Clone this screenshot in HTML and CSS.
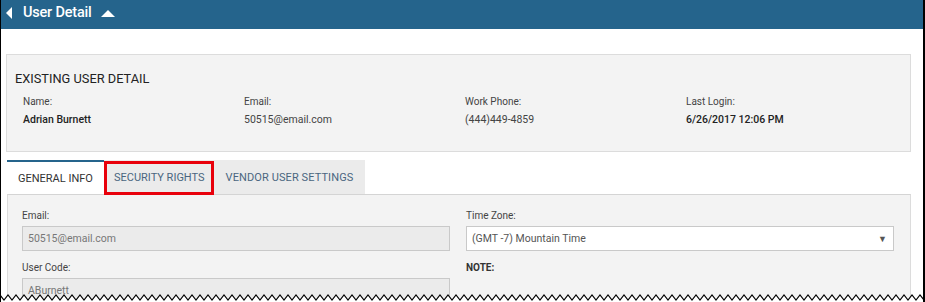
FILE: index.html
```html
<!DOCTYPE html>
<html>
<head>
  <meta charset="UTF-8">
  <title>User Detail</title>
  <link rel="stylesheet" href="styles.css">
</head>
<body>

<div class="frame">
  <div class="topbar">
    <span class="back-tri"></span>
    <span class="title">User Detail</span>
    <span class="up-tri"></span>
  </div>

  <div class="content">
    <div class="summary">
      <h2>EXISTING USER DETAIL</h2>
      <div class="summary-grid">
        <div class="field">
          <div class="label">Name:</div>
          <div class="value strong">Adrian Burnett</div>
        </div>
        <div class="field">
          <div class="label">Email:</div>
          <div class="value">50515@email.com</div>
        </div>
        <div class="field">
          <div class="label">Work Phone:</div>
          <div class="value">(444)449-4859</div>
        </div>
        <div class="field">
          <div class="label">Last Login:</div>
          <div class="value strong">6/26/2017 12:06 PM</div>
        </div>
      </div>
    </div>

    <div class="tabs">
      <div class="tab active">GENERAL INFO</div>
      <div class="tab marked">SECURITY RIGHTS</div>
      <div class="tab last">VENDOR USER SETTINGS</div>
    </div>

    <div class="tab-panel">
      <div class="form-col">
        <div class="form-label">Email:</div>
        <div class="input disabled">50515@email.com</div>
        <div class="form-label">User Code:</div>
        <div class="input disabled">ABurnett</div>
      </div>
      <div class="form-col">
        <div class="form-label">Time Zone:</div>
        <div class="input select">(GMT -7) Mountain Time <span class="arrow">&#9660;</span></div>
        <div class="form-label note">NOTE:</div>
      </div>
    </div>
  </div>

  <svg class="torn" width="925" height="10" viewBox="0 0 925 10">
    <polygon fill="#fff" points="0,10 0,3 4,8 8,3 12,8 16,3 20,8 24,3 28,8 32,3 36,8 40,3 44,8 48,3 52,8 56,3 60,8 64,3 68,8 72,3 76,8 80,3 84,8 88,3 92,8 96,3 100,8 104,3 108,8 112,3 116,8 120,3 124,8 128,3 132,8 136,3 140,8 144,3 148,8 152,3 156,8 160,3 164,8 168,3 172,8 176,3 180,8 184,3 188,8 192,3 196,8 200,3 204,8 208,3 212,8 216,3 220,8 224,3 228,8 232,3 236,8 240,3 244,8 248,3 252,8 256,3 260,8 264,3 268,8 272,3 276,8 280,3 284,8 288,3 292,8 296,3 300,8 304,3 308,8 312,3 316,8 320,3 324,8 328,3 332,8 336,3 340,8 344,3 348,8 352,3 356,8 360,3 364,8 368,3 372,8 376,3 380,8 384,3 388,8 392,3 396,8 400,3 404,8 408,3 412,8 416,3 420,8 424,3 428,8 432,3 436,8 440,3 444,8 448,3 452,8 456,3 460,8 464,3 468,8 472,3 476,8 480,3 484,8 488,3 492,8 496,3 500,8 504,3 508,8 512,3 516,8 520,3 524,8 528,3 532,8 536,3 540,8 544,3 548,8 552,3 556,8 560,3 564,8 568,3 572,8 576,3 580,8 584,3 588,8 592,3 596,8 600,3 604,8 608,3 612,8 616,3 620,8 624,3 628,8 632,3 636,8 640,3 644,8 648,3 652,8 656,3 660,8 664,3 668,8 672,3 676,8 680,3 684,8 688,3 692,8 696,3 700,8 704,3 708,8 712,3 716,8 720,3 724,8 728,3 732,8 736,3 740,8 744,3 748,8 752,3 756,8 760,3 764,8 768,3 772,8 776,3 780,8 784,3 788,8 792,3 796,8 800,3 804,8 808,3 812,8 816,3 820,8 824,3 828,8 832,3 836,8 840,3 844,8 848,3 852,8 856,3 860,8 864,3 868,8 872,3 876,8 880,3 884,8 888,3 892,8 896,3 900,8 904,3 908,8 912,3 916,8 920,3 924,8 925,7 925,10"/>
    <polyline fill="none" stroke="#000" stroke-width="1.2" points="0,3 4,8 8,3 12,8 16,3 20,8 24,3 28,8 32,3 36,8 40,3 44,8 48,3 52,8 56,3 60,8 64,3 68,8 72,3 76,8 80,3 84,8 88,3 92,8 96,3 100,8 104,3 108,8 112,3 116,8 120,3 124,8 128,3 132,8 136,3 140,8 144,3 148,8 152,3 156,8 160,3 164,8 168,3 172,8 176,3 180,8 184,3 188,8 192,3 196,8 200,3 204,8 208,3 212,8 216,3 220,8 224,3 228,8 232,3 236,8 240,3 244,8 248,3 252,8 256,3 260,8 264,3 268,8 272,3 276,8 280,3 284,8 288,3 292,8 296,3 300,8 304,3 308,8 312,3 316,8 320,3 324,8 328,3 332,8 336,3 340,8 344,3 348,8 352,3 356,8 360,3 364,8 368,3 372,8 376,3 380,8 384,3 388,8 392,3 396,8 400,3 404,8 408,3 412,8 416,3 420,8 424,3 428,8 432,3 436,8 440,3 444,8 448,3 452,8 456,3 460,8 464,3 468,8 472,3 476,8 480,3 484,8 488,3 492,8 496,3 500,8 504,3 508,8 512,3 516,8 520,3 524,8 528,3 532,8 536,3 540,8 544,3 548,8 552,3 556,8 560,3 564,8 568,3 572,8 576,3 580,8 584,3 588,8 592,3 596,8 600,3 604,8 608,3 612,8 616,3 620,8 624,3 628,8 632,3 636,8 640,3 644,8 648,3 652,8 656,3 660,8 664,3 668,8 672,3 676,8 680,3 684,8 688,3 692,8 696,3 700,8 704,3 708,8 712,3 716,8 720,3 724,8 728,3 732,8 736,3 740,8 744,3 748,8 752,3 756,8 760,3 764,8 768,3 772,8 776,3 780,8 784,3 788,8 792,3 796,8 800,3 804,8 808,3 812,8 816,3 820,8 824,3 828,8 832,3 836,8 840,3 844,8 848,3 852,8 856,3 860,8 864,3 868,8 872,3 876,8 880,3 884,8 888,3 892,8 896,3 900,8 904,3 908,8 912,3 916,8 920,3 924,8 925,7"/>
  </svg>
</div>

</body>
</html>
```

FILE: styles.css
```css
html, body {
  margin: 0;
  padding: 0;
  background: #fff;
}
body {
  font-family: Roboto, "Liberation Sans", sans-serif;
  color: #333;
}
.frame {
  position: relative;
  width: 922px;
  height: 302px;
  overflow: hidden;
  border-left: 1px solid #000;
  border-right: 2px solid #000;
  background: #fff;
}
.topbar {
  height: 29px;
  background: #25648c;
  color: #fff;
  display: flex;
  align-items: center;
  padding-left: 5px;
}
.back-tri {
  width: 0;
  height: 0;
  border-top: 6.5px solid transparent;
  border-bottom: 6.5px solid transparent;
  border-right: 6px solid #fff;
  margin-right: 11px;
  margin-bottom: 3px;
}
.title {
  font-size: 14.5px;
  font-weight: 500;
  letter-spacing: -0.2px;
  margin-bottom: 4px;
}
.up-tri {
  width: 0;
  height: 0;
  border-left: 7px solid transparent;
  border-right: 7px solid transparent;
  border-bottom: 7px solid #fff;
  margin-left: 9px;
  margin-bottom: 3px;
}
.content {
  padding: 25px 12px 0 5px;
}
.summary {
  background: #f3f3f3;
  border: 1px solid #dcdcdc;
  padding: 16px 3px 25px 8px;
}
.summary h2 {
  margin: 0 0 9px 0;
  font-size: 12.8px;
  font-weight: 400;
  color: #222;
  line-height: 15px;
}
.summary-grid {
  display: grid;
  grid-template-columns: repeat(4, 1fr);
  padding-left: 8px;
}
.label {
  font-size: 10px;
  color: #444;
  line-height: 13px;
}
.value {
  font-size: 10.5px;
  color: #444;
  line-height: 13px;
  margin-top: 5px;
}
.value.strong {
  font-weight: 500;
  color: #222;
}
.tabs {
  display: flex;
  margin-top: 8px;
  margin-left: 1px;
}
.tab {
  position: relative;
  height: 34px;
  box-sizing: border-box;
  padding: 0 10px;
  display: flex;
  align-items: center;
  font-size: 11px;
  color: #4a6680;
  background: #ebebeb;
}
.tab.active {
  background: #fff;
  color: #333;
  border-top: 2px solid #25648c;
  padding: 0 11px;
}
.tab.marked {
  padding: 0 9px 0 10px;
}
.tab.last {
  padding: 0 12px 0 12px;
  letter-spacing: 0.1px;
}
.tab.marked::after {
  content: "";
  position: absolute;
  left: 0;
  top: 1px;
  right: 0;
  bottom: -1px;
  border: 3px solid #e8000b;
}
.tab-panel {
  margin-left: 1px;
  background: #f3f3f3;
  border: 1px solid #dcdcdc;
  border-top-color: #d4d4d4;
  height: 140px;
  padding: 14px 16px 0 14px;
  display: grid;
  grid-template-columns: 1fr 1fr;
  column-gap: 16px;
}
.form-label {
  font-size: 10px;
  color: #444;
  line-height: 13px;
  margin-bottom: 4px;
}
.input {
  height: 25px;
  box-sizing: border-box;
  border: 1px solid #c9c9c9;
  font-size: 10.5px;
  color: #666;
  padding: 0 5px;
  display: flex;
  align-items: center;
  margin-bottom: 10px;
}
.input.disabled {
  background: #ebebeb;
  color: #777;
}
.input.select {
  background: #fff;
  color: #555;
  position: relative;
}
.arrow {
  position: absolute;
  right: 6px;
  top: 7px;
  font-size: 9px;
  color: #555;
}
.note {
  font-weight: 700;
  color: #333;
}
.torn {
  position: absolute;
  left: -1px;
  bottom: 0;
  display: block;
}
```
